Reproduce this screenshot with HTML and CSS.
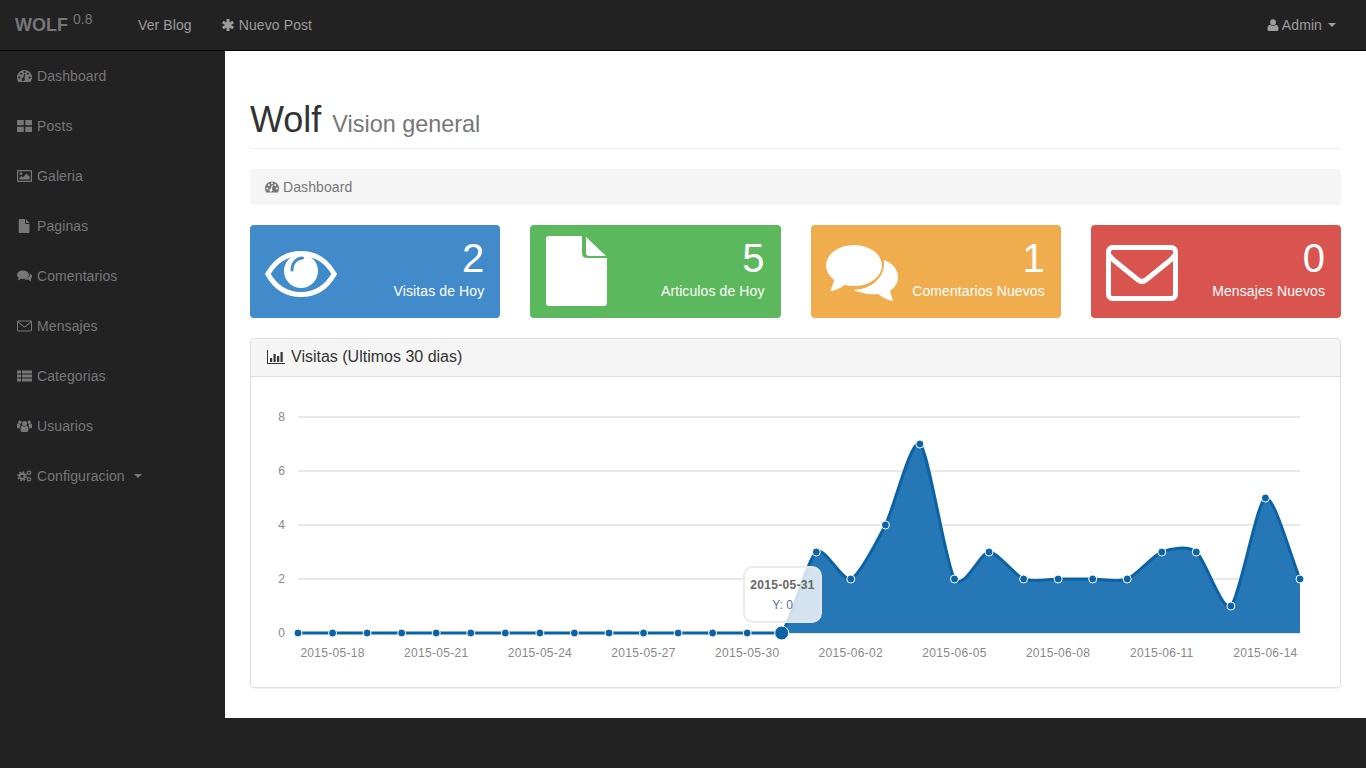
FILE: index.html
```html
<!DOCTYPE html>
<html lang="es">
<head>
<meta charset="utf-8">
<title>Wolf</title>
<link rel="stylesheet" href="styles.css">
</head>
<body>
<header class="navbar">
  <a class="brand">WOLF <sup class="version">0.8</sup></a>
  <a class="nav-link">Ver Blog</a>
  <a class="nav-link nav-post">
    <svg class="ic ic-nav" viewBox="0 0 12 12"><path class="asterisk" d="M6 0V12M.8 3L11.2 9M.8 9L11.2 3"/></svg>
    Nuevo Post
  </a>
  <a class="nav-link nav-user">
    <svg class="ic ic-nav" viewBox="0 0 12 13"><circle cx="6" cy="3.4" r="3.2"/><path d="M0 11c0-3 1-4.800 3-4.800.8.600 1.800 1 3 1s2.200-.4 3-1c2 0 3 1.800 3 4.800 0 1.200-.8 2-2 2H2c-1.200 0-2-.8-2-2z"/></svg>
    Admin <span class="caret"></span>
  </a>
</header>

<div class="layout">
  <nav class="sidebar">
    <a class="side-item"><span class="side-ic"><svg class="ic" viewBox="0 0 14 12"><path fill-rule="evenodd" d="M7 .5C3.100.5 0 3.600 0 7.500c0 1.300.4 2.600 1 3.600.1.200.3.4.6.4h10.800c.3 0 .5-.2.6-.4.600-1 1-2.300 1-3.600 0-3.900-3.100-7-7-7zM1.200 7.500a1 1 0 1 0 2 0a1 1 0 1 0-2 0zM2.900 3.900a1 1 0 1 0 2 0a1 1 0 1 0-2 0zM6 2.300a1 1 0 1 0 2 0a1 1 0 1 0-2 0zM9.100 3.900a1 1 0 1 0 2 0a1 1 0 1 0-2 0zM10.800 7.500a1 1 0 1 0 2 0a1 1 0 1 0-2 0zM5.700 7.700L6.900 4l1 .3-1 3.800a1.500 1.500 0 1 1-1.200-.4z"/></svg></span>Dashboard</a>
    <a class="side-item"><span class="side-ic"><svg class="ic" viewBox="0 0 14 12"><path d="M0 .5h6.300v4.800H0zM7.700.5H14v4.800H7.700zM0 6.700h6.300v4.800H0zM7.700 6.700H14v4.800H7.700z"/></svg></span>Posts</a>
    <a class="side-item"><span class="side-ic"><svg class="ic" viewBox="0 0 15 12"><path fill-rule="evenodd" d="M1 0h13a1 1 0 0 1 1 1v10a1 1 0 0 1-1 1H1a1 1 0 0 1-1-1V1a1 1 0 0 1 1-1zM1.200 1.200v9.600h12.600V1.200z"/><circle cx="4" cy="3.700" r="1.400"/><path d="M2.400 9.600V8l2-2 1.400 1.400L9.500 3.600l3.100 3.200v2.800z"/></svg></span>Galeria</a>
    <a class="side-item"><span class="side-ic"><svg class="ic" viewBox="0 0 14 14"><path d="M2 0h5.600v4.200c0 .4.300.7.700.7H12v8.300c0 .5-.3.800-.8.800H2c-.5 0-.8-.3-.8-.8V.8C1.200.3 1.500 0 2 0zM8.600 0L12 3.900H8.600z"/></svg></span>Paginas</a>
    <a class="side-item"><span class="side-ic"><svg class="ic" viewBox="0 0 15 12"><ellipse cx="6" cy="4.800" rx="6" ry="4.300"/><path d="M1.600 7.500L1 10.500l3.500-2zM12.800 3.600c1.400.7 2.200 1.800 2.200 3 0 1-.5 1.800-1.400 2.500l.6 2.400-3-1.700c-1.500.2-3 0-4.100-.9 3.300 0 6-1.800 5.700-5.300z"/></svg></span>Comentarios</a>
    <a class="side-item"><span class="side-ic"><svg class="ic" viewBox="0 0 15 12"><path fill-rule="evenodd" d="M1.200.5h12.600c.7 0 1.200.5 1.200 1.200v8.600c0 .7-.5 1.200-1.200 1.200H1.200C.5 11.500 0 11 0 10.300V1.700C0 1 .5.500 1.200.5zM1 2.600v7.700c0 .1.100.2.200.2h12.600c.1 0 .2-.1.200-.2V2.600L8.400 7.100c-.5.400-1.300.4-1.800 0zM1.400 1.500l5.800 4.800c.2.100.4.100.6 0l5.800-4.800z"/></svg></span>Mensajes</a>
    <a class="side-item"><span class="side-ic"><svg class="ic" viewBox="0 0 15 12"><path d="M0 .5h4v3H0zM5 .5h10v3H5zM0 4.500h4v3H0zM5 4.500h10v3H5zM0 8.500h4v3H0zM5 8.500h10v3H5z"/></svg></span>Categorias</a>
    <a class="side-item"><span class="side-ic"><svg class="ic" viewBox="0 0 15 12"><circle cx="7.500" cy="3.400" r="2.500"/><circle cx="2.800" cy="2.200" r="1.700"/><circle cx="12.200" cy="2.200" r="1.700"/><path d="M3.600 8.200c0-1.500 1-2.500 1.900-2.500.6.400 1.200.7 2 .7s1.400-.3 2-.7c.9 0 1.900 1 1.900 2.500v2c0 1-.7 1.800-1.700 1.800H5.300c-1 0-1.700-.8-1.700-1.800zM0 4.900c0-.7.500-1.300 1.100-1.300.5.300 1 .5 1.500.5.400.9.800 1.200 1.300 1.500-.8.500-1.200 1.500-1.200 2.600H1c-.6 0-1-.4-1-1zM15 4.900c0-.7-.5-1.300-1.100-1.300-.5.300-1 .5-1.500.5-.4.900-.8 1.200-1.300 1.500.8.500 1.200 1.500 1.200 2.600H14c.6 0 1-.4 1-1z"/></svg></span>Usuarios</a>
    <a class="side-item"><span class="side-ic"><svg class="ic" viewBox="0 0 16 13"><circle class="gear-ring" cx="5.500" cy="6.800" r="2.700"/><circle class="gear-teeth" cx="5.500" cy="6.800" r="4.500"/><circle class="gear-small" cx="12.800" cy="3" r="1.800"/><circle class="gear-small" cx="12.800" cy="10" r="1.800"/></svg></span>Configuracion <span class="caret caret-side"></span></a>
  </nav>

  <main class="content">
    <div class="page-header">
      <h1 class="title">Wolf <small class="subtitle">Vision general</small></h1>
    </div>
    <div class="breadcrumb">
      <svg class="ic ic-crumb" viewBox="0 0 14 12"><path fill-rule="evenodd" d="M7 .5C3.100.5 0 3.600 0 7.500c0 1.300.4 2.600 1 3.600.1.200.3.4.6.4h10.800c.3 0 .5-.2.600-.4.600-1 1-2.300 1-3.600 0-3.900-3.100-7-7-7zM1.200 7.500a1 1 0 1 0 2 0a1 1 0 1 0-2 0zM2.900 3.900a1 1 0 1 0 2 0a1 1 0 1 0-2 0zM6 2.300a1 1 0 1 0 2 0a1 1 0 1 0-2 0zM9.100 3.900a1 1 0 1 0 2 0a1 1 0 1 0-2 0zM10.800 7.500a1 1 0 1 0 2 0a1 1 0 1 0-2 0zM5.700 7.700L6.900 4l1 .3-1 3.800a1.500 1.500 0 1 1-1.200-.4z"/></svg>
      Dashboard
    </div>

    <section class="cards">
      <article class="card card-blue">
        <svg class="big-ic" viewBox="0 0 72 46"><path class="eye-out" d="M2.800 23C10.500 9.500 22.500 2.500 36 2.500S61.500 9.500 69.200 23C61.500 36.500 49.500 43.500 36 43.500S10.500 36.500 2.800 23z"/><circle cx="36" cy="20" r="17" class="eye-ball"/><path class="eye-glint" d="M37.500 7C31.500 7 27 12 27 19"/></svg>
        <div class="card-text"><div class="num">2</div><div class="lbl">Visitas de Hoy</div></div>
      </article>
      <article class="card card-green">
        <svg class="big-ic" viewBox="0 0 61 70"><path d="M3 0h33v17c0 3 2 5 5 5h20v45c0 2-1 3-3 3H3c-2 0-3-1-3-3V3c0-2 1-3 3-3z"/><path d="M40 1l20 19H43c-2 0-3-1-3-3z"/></svg>
        <div class="card-text"><div class="num">5</div><div class="lbl">Articulos de Hoy</div></div>
      </article>
      <article class="card card-orange">
        <svg class="big-ic" viewBox="0 0 72 56"><ellipse cx="28" cy="20.500" rx="28" ry="20.500"/><path d="M9 33L4.500 46c5-.5 11-3 15-7z"/><path d="M58 15c8 3 14 9 14 17 0 6-3 10-8 14l3 10c-6-1-11-4-15-7-9 1-17-1-25-4 16 0 33-11 31-30z"/></svg>
        <div class="card-text"><div class="num">1</div><div class="lbl">Comentarios Nuevos</div></div>
      </article>
      <article class="card card-red">
        <svg class="big-ic" viewBox="0 0 72 56"><rect class="env" x="2.500" y="2.500" width="67" height="51" rx="4"/><path class="env" d="M3.500 10c1 2 2 3.500 4 5l24 19.500c3 2.500 6 2.500 9 0l24-19.500c2-1.500 3-3 4-5"/></svg>
        <div class="card-text"><div class="num">0</div><div class="lbl">Mensajes Nuevos</div></div>
      </article>
    </section>

    <section class="panel">
      <div class="panel-heading">
        <svg class="ic ic-bars" viewBox="0 0 18 14"><path d="M0 0h1v13h17v1H0z"/><path d="M3 8h2.200v4H3zM6.500 4h2.200v8H6.500zM10 6h2.200v6H10zM13.500 2h2.200v10h-2.200z"/></svg>
        Visitas (Ultimos 30 dias)
      </div>
      <div class="chart">
        <svg class="chart-svg" viewBox="251 377 1089 309">
          <g class="grid">
            <path d="M298 417H1300M298 471H1300M298 525H1300M298 579H1300M298 633H1300"/>
          </g>
          <g class="y-labels">
            <text x="285" y="421">8</text><text x="285" y="475">6</text><text x="285" y="529">4</text><text x="285" y="583">2</text><text x="285" y="637">0</text>
          </g>
          <g class="x-labels">
            <text x="332.600" y="657">2015-05-18</text><text x="436.200" y="657">2015-05-21</text><text x="539.900" y="657">2015-05-24</text><text x="643.500" y="657">2015-05-27</text><text x="747.200" y="657">2015-05-30</text><text x="850.800" y="657">2015-06-02</text><text x="954.500" y="657">2015-06-05</text><text x="1058.100" y="657">2015-06-08</text><text x="1161.800" y="657">2015-06-11</text><text x="1265.400" y="657">2015-06-14</text>
          </g>
          <path class="area" d="M781.700 633C790.300 622.900 807.700 558.750 816.300 552C824.900 545.250 842.200 582.400 850.800 579C859.400 575.600 876.800 541.900 885.400 525C894 508.100 911.300 437.250 919.900 444C928.500 450.750 945.900 565.500 954.500 579C963.100 592.500 980.400 552 989 552C997.600 552 1015 575.600 1023.600 579C1032.200 582.400 1049.500 579 1058.100 579C1066.700 579 1084.100 579 1092.700 579C1101.300 579 1118.600 582.400 1127.200 579C1135.800 575.600 1153.200 555.400 1161.800 552C1170.400 548.600 1187.700 545.250 1196.300 552C1204.900 558.750 1222.300 612.750 1230.900 606C1239.500 599.250 1256.800 501.400 1265.400 498C1274 494.600 1291.400 558.750 1300 579V633z"/>
          <path class="line" d="M298 633H781.700C790.300 622.900 807.700 558.750 816.300 552C824.900 545.250 842.200 582.400 850.800 579C859.400 575.600 876.800 541.900 885.400 525C894 508.100 911.300 437.250 919.900 444C928.500 450.750 945.900 565.500 954.500 579C963.100 592.500 980.400 552 989 552C997.600 552 1015 575.600 1023.600 579C1032.200 582.400 1049.500 579 1058.100 579C1066.700 579 1084.100 579 1092.700 579C1101.300 579 1118.600 582.400 1127.200 579C1135.800 575.600 1153.200 555.400 1161.800 552C1170.400 548.600 1187.700 545.250 1196.300 552C1204.900 558.750 1222.300 612.750 1230.900 606C1239.500 599.250 1256.800 501.400 1265.400 498C1274 494.600 1291.400 558.750 1300 579"/>
          <g class="points">
            <circle cx="298" cy="633" r="4"/><circle cx="332.600" cy="633" r="4"/><circle cx="367.100" cy="633" r="4"/><circle cx="401.700" cy="633" r="4"/><circle cx="436.200" cy="633" r="4"/><circle cx="470.800" cy="633" r="4"/><circle cx="505.300" cy="633" r="4"/><circle cx="539.900" cy="633" r="4"/><circle cx="574.400" cy="633" r="4"/><circle cx="609" cy="633" r="4"/><circle cx="643.500" cy="633" r="4"/><circle cx="678.100" cy="633" r="4"/><circle cx="712.600" cy="633" r="4"/><circle cx="747.200" cy="633" r="4"/><circle cx="781.700" cy="633" r="7"/><circle cx="816.300" cy="552" r="4"/><circle cx="850.800" cy="579" r="4"/><circle cx="885.400" cy="525" r="4"/><circle cx="919.900" cy="444" r="4"/><circle cx="954.500" cy="579" r="4"/><circle cx="989" cy="552" r="4"/><circle cx="1023.600" cy="579" r="4"/><circle cx="1058.100" cy="579" r="4"/><circle cx="1092.700" cy="579" r="4"/><circle cx="1127.200" cy="579" r="4"/><circle cx="1161.800" cy="552" r="4"/><circle cx="1196.300" cy="552" r="4"/><circle cx="1230.900" cy="606" r="4"/><circle cx="1265.400" cy="498" r="4"/><circle cx="1300" cy="579" r="4"/>
          </g>
        </svg>
        <div class="hover-tip">
          <div class="tip-date">2015-05-31</div>
          <div class="tip-val">Y: 0</div>
        </div>
      </div>
    </section>
  </main>
</div>
<div class="footer-space"></div>
</body>
</html>
```

FILE: styles.css
```css
* { box-sizing: border-box; }
html, body { margin: 0; height: 768px; overflow: hidden; }
body {
  background: #222;
  font-family: "Liberation Sans", Arial, sans-serif;
  font-size: 14px;
  line-height: 20px;
  color: #333;
}
.ic { fill: currentColor; display: inline-block; }

/* Navbar */
.navbar {
  display: flex;
  align-items: center;
  height: 51px;
  background: #222;
  border-bottom: 1px solid #080808;
  color: #9d9d9d;
}
.brand {
  padding: 0 15px;
  margin-right: 15px;
  width: 108px;
  font-size: 18px;
  font-weight: bold;
  color: #777;
  white-space: nowrap;
}
.version {
  font-size: 14px;
  font-weight: normal;
  line-height: 0;
  vertical-align: super;
}
.nav-link {
  display: flex;
  align-items: center;
  gap: 4px;
  padding: 0 15px;
  height: 50px;
  color: #9d9d9d;
  white-space: nowrap;
  letter-spacing: .1px;
}
.nav-post { gap: 5px; }
.nav-user { margin-left: auto; padding-right: 30px; gap: 3px; }
.ic-nav { width: 12px; height: 12px; }
.asterisk { fill: none; stroke: currentColor; stroke-width: 3; }
.caret {
  display: inline-block;
  width: 0;
  height: 0;
  margin-left: 3px;
  border-top: 4px solid currentColor;
  border-left: 4px solid transparent;
  border-right: 4px solid transparent;
}

/* Layout */
.layout { display: flex; height: 667px; }
.sidebar { width: 225px; flex: none; background: #222; }
.side-item {
  display: flex;
  align-items: center;
  height: 50px;
  padding-left: 17px;
  color: #777;
  white-space: nowrap;
  letter-spacing: .1px;
}
.side-ic { width: 20px; display: flex; flex: none; }
.side-ic .ic { width: 15px; height: 14px; }
.caret-side { margin-left: 9px; }
.gear-ring { fill: none; stroke: currentColor; stroke-width: 2; }
.gear-teeth { fill: none; stroke: currentColor; stroke-width: 1.600; stroke-dasharray: 1.900 1.630; }
.gear-small { fill: none; stroke: currentColor; stroke-width: 1.300; }

/* Content */
.content { flex: 1; background: #fff; padding: 0 25px; min-width: 0; }
.page-header {
  margin-top: 49px;
  padding-bottom: 3px;
  border-bottom: 1px solid #eee;
}
.title {
  margin: 0;
  font-size: 36px;
  font-weight: normal;
  line-height: 39.600px;
  color: #333;
}
.subtitle { font-size: 23.400px; color: #777; font-weight: normal; margin-left: 1px; }
.breadcrumb {
  display: flex;
  align-items: center;
  gap: 4px;
  height: 36px;
  margin-top: 20px;
  padding: 0 15px;
  background: #f5f5f5;
  border-radius: 4px;
  color: #777;
  letter-spacing: .1px;
}
.ic-crumb { width: 14px; height: 12px; }

/* Cards */
.cards {
  display: grid;
  grid-template-columns: repeat(4, 1fr);
  gap: 30px;
  margin-top: 20px;
}
.card {
  display: flex;
  justify-content: space-between;
  align-items: center;
  height: 93px;
  padding: 0 16px 2px 15px;
  border-radius: 4px;
  color: #fff;
}
.big-ic { display: block; fill: #fff; flex: none; }
.card-blue { background: #428bca; }
.card-green { background: #5cb85c; }
.card-orange { background: #f0ad4e; }
.card-red { background: #d9534f; }
.card-blue .big-ic { width: 72px; height: 46px; margin-top: 7px; }
.card-green .big-ic { width: 61px; height: 70px; margin-top: 1px; margin-left: 1px; }
.card-orange .big-ic, .card-red .big-ic { width: 72px; height: 56px; margin-top: 6px; }
.eye-out { fill: none; stroke: #fff; stroke-width: 5; }
.eye-ball { fill: #fff; }
.eye-glint { fill: none; stroke: #428bca; stroke-width: 3; stroke-linecap: round; }
.env { fill: none; stroke: #fff; stroke-width: 5; }
.card-text { text-align: right; }
.num { font-size: 40px; line-height: 36px; margin-bottom: 5px; }
.lbl { white-space: nowrap; letter-spacing: .1px; }

/* Panel */
.panel {
  margin-top: 20px;
  height: 350px;
  border: 1px solid #ddd;
  border-radius: 4px;
  box-shadow: 0 1px 1px rgba(0, 0, 0, .05);
  overflow: hidden;
}
.panel-heading {
  display: flex;
  align-items: center;
  gap: 6px;
  height: 38px;
  padding: 0 16px;
  background: #f5f5f5;
  border-bottom: 1px solid #ddd;
  font-size: 16px;
  color: #333;
}
.ic-bars { width: 18px; height: 14px; }
.chart { position: relative; height: 310px; }
.chart-svg { display: block; width: 1089px; height: 309px; }
.grid path { fill: none; stroke: #e9e9e9; stroke-width: 2; }
.y-labels text, .x-labels text {
  font-family: "Liberation Sans", Arial, sans-serif;
  font-size: 12px;
  fill: #888;
}
.y-labels text { text-anchor: end; }
.x-labels text { text-anchor: middle; letter-spacing: .3px; }
.area { fill: #2577b5; }
.line { fill: none; stroke: #0b62a4; stroke-width: 3; }
.points circle { fill: #0b62a4; stroke: #fff; stroke-width: 1; }
.hover-tip {
  position: absolute;
  left: 492px;
  top: 189px;
  width: 79px;
  height: 57px;
  padding-top: 9px;
  border: 2px solid rgba(230, 230, 230, .8);
  border-radius: 10px;
  background: rgba(255, 255, 255, .8);
  font-size: 12px;
  text-align: center;
}
.tip-date { font-weight: bold; color: #666; line-height: 16px; margin-bottom: 4px; letter-spacing: .3px; }
.tip-val { color: #56708f; line-height: 16px; }
.footer-space { height: 50px; background: #222; }
```
